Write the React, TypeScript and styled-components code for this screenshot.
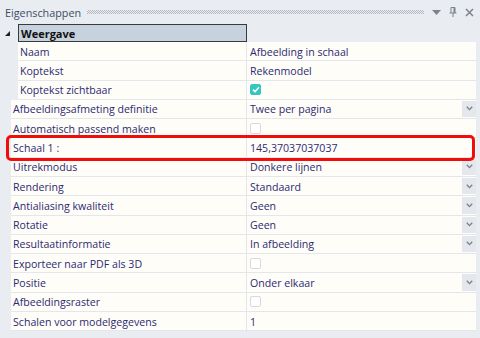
import React from "react";
import styled, { createGlobalStyle } from "styled-components";

const Global = createGlobalStyle`
  html, body { margin: 0; padding: 0; background: #e9ecf1; }
  body { font-family: "Open Sans", "Noto Sans", sans-serif; }
`;

const Panel = styled.div`
  width: 480px;
  height: 338px;
  background: #e9ecf1;
  overflow: hidden;
`;

const TitleBar = styled.div`
  height: 24px;
  display: flex;
  align-items: center;
  padding: 0 6px 0 5px;
  box-sizing: border-box;
`;

const Title = styled.span`
  font-size: 10.8px;
  color: #3e4c66;
`;

const Grip = styled.div`
  flex: 1;
  height: 4px;
  margin: 0 8px 0 6px;
  background: repeating-conic-gradient(#b3b8c1 0 25%, transparent 0 50%) 0 0 / 2px 2px;
`;

const TitleIcons = styled.div`
  display: flex;
  align-items: center;
  gap: 8px;
`;

const Grid = styled.div`
  position: relative;
`;

const GroupRow = styled.div`
  display: flex;
  height: 18px;
  align-items: stretch;
`;

const Expander = styled.div`
  width: 18px;
  display: flex;
  align-items: center;
  justify-content: flex-start;
  padding-left: 5px;
  box-sizing: border-box;
`;

const GroupHeader = styled.div`
  width: 229px;
  box-sizing: border-box;
  border: 1px solid #3a3a3a;
  background: #c6d3de;
  font-weight: 700;
  font-size: 11px;
  color: #111;
  display: flex;
  align-items: center;
  padding-left: 2px;
`;

const Rows = styled.div`
  display: flex;
  flex-direction: column;
`;

const Row = styled.div<{ $indent: number }>`
  height: 19.29px;
  margin-left: ${(p) => p.$indent}px;
  margin-right: 4px;
  display: flex;
  background: #fffdf8;
  border-bottom: 1px solid #e3e6ec;
  box-sizing: border-box;
  font-size: 10.6px;
  color: #2c2a72;
`;

const Label = styled.div<{ $indent: number }>`
  width: ${(p) => 247 - p.$indent}px;
  box-sizing: border-box;
  border-right: 1px solid #e3e6ec;
  padding: 1px 0 0 2px;
  display: flex;
  align-items: center;
  white-space: nowrap;
  overflow: hidden;
`;

const Value = styled.div`
  flex: 1;
  display: flex;
  align-items: center;
  padding: 1px 0 0 3px;
  position: relative;
  white-space: nowrap;
`;

const DropButton = styled.div`
  position: absolute;
  right: 0;
  top: 1px;
  bottom: 1px;
  width: 14px;
  background: #e4e7ec;
  display: flex;
  align-items: center;
  justify-content: center;
`;

const Check = styled.div<{ $on: boolean }>`
  width: 11px;
  height: 11px;
  box-sizing: border-box;
  border-radius: 2px;
  background: ${(p) => (p.$on ? "#36c6c0" : "#ffffff")};
  border: 1px solid ${(p) => (p.$on ? "#36c6c0" : "#d6d9df")};
  display: flex;
  align-items: center;
  justify-content: center;
  margin-top: -1px;
`;

const Highlight = styled.div`
  position: absolute;
  left: 6px;
  top: 93px;
  width: 469px;
  height: 26px;
  box-sizing: border-box;
  border: 3px solid #f20d0d;
  border-radius: 5px;
  pointer-events: none;
`;

type Kind = "text" | "drop" | "check" | "checked";
type Prop = { label: string; value?: string; kind: Kind; indent: number };

const props: Prop[] = [
  { label: "Naam", value: "Afbeelding in schaal", kind: "text", indent: 18 },
  { label: "Koptekst", value: "Rekenmodel", kind: "text", indent: 18 },
  { label: "Koptekst zichtbaar", kind: "checked", indent: 18 },
  { label: "Afbeeldingsafmeting definitie", value: "Twee per pagina", kind: "drop", indent: 11 },
  { label: "Automatisch passend maken", kind: "check", indent: 11 },
  { label: "Schaal 1 :", value: "145,37037037037", kind: "text", indent: 11 },
  { label: "Uitrekmodus", value: "Donkere lijnen", kind: "drop", indent: 11 },
  { label: "Rendering", value: "Standaard", kind: "drop", indent: 11 },
  { label: "Antialiasing kwaliteit", value: "Geen", kind: "drop", indent: 11 },
  { label: "Rotatie", value: "Geen", kind: "drop", indent: 11 },
  { label: "Resultaatinformatie", value: "In afbeelding", kind: "drop", indent: 11 },
  { label: "Exporteer naar PDF als 3D", kind: "check", indent: 11 },
  { label: "Positie", value: "Onder elkaar", kind: "drop", indent: 11 },
  { label: "Afbeeldingsraster", kind: "check", indent: 11 },
  { label: "Schalen voor modelgegevens", value: "1", kind: "text", indent: 11 },
];

const Chevron = () => (
  <svg width="7" height="5" viewBox="0 0 7 5">
    <path d="M0.8 0.8 L3.5 3.6 L6.2 0.8" fill="none" stroke="#7a7f88" strokeWidth="1.3" />
  </svg>
);

const Tick = () => (
  <svg width="8" height="7" viewBox="0 0 8 7">
    <path d="M1 3.6 L3.1 5.6 L7 1.2" fill="none" stroke="#ffffff" strokeWidth="1.5" />
  </svg>
);

export default function App() {
  return (
    <Panel>
      <Global />
      <TitleBar>
        <Title>Eigenschappen</Title>
        <Grip />
        <TitleIcons>
          <svg width="9" height="5" viewBox="0 0 9 5">
            <polygon points="0,0 9,0 4.5,5" fill="#7d828b" />
          </svg>
          <svg width="8" height="10" viewBox="0 0 8 10">
            <path d="M2 0.5 H6 V6 M2 0.5 V6 M0.5 6 H7.5 M4 6 V10" fill="none" stroke="#7d828b" strokeWidth="1" />
            <rect x="4.5" y="0.5" width="1.5" height="5.5" fill="#7d828b" />
          </svg>
          <svg width="9" height="9" viewBox="0 0 9 9">
            <path d="M1 1 L8 8 M8 1 L1 8" stroke="#7d828b" strokeWidth="1.5" />
          </svg>
        </TitleIcons>
      </TitleBar>
      <GroupRow>
        <Expander>
          <svg width="5" height="5" viewBox="0 0 5 5">
            <polygon points="5,0 5,5 0,5" fill="#222" />
          </svg>
        </Expander>
        <GroupHeader>Weergave</GroupHeader>
      </GroupRow>
      <Grid>
        <Rows>
          {props.map((p) => (
            <Row key={p.label} $indent={p.indent}>
              <Label $indent={p.indent}>{p.label}</Label>
              <Value>
                {p.kind === "checked" && (
                  <Check $on>
                    <Tick />
                  </Check>
                )}
                {p.kind === "check" && <Check $on={false} />}
                {(p.kind === "text" || p.kind === "drop") && p.value}
                {p.kind === "drop" && (
                  <DropButton>
                    <Chevron />
                  </DropButton>
                )}
              </Value>
            </Row>
          ))}
        </Rows>
        <Highlight />
      </Grid>
    </Panel>
  );
}
